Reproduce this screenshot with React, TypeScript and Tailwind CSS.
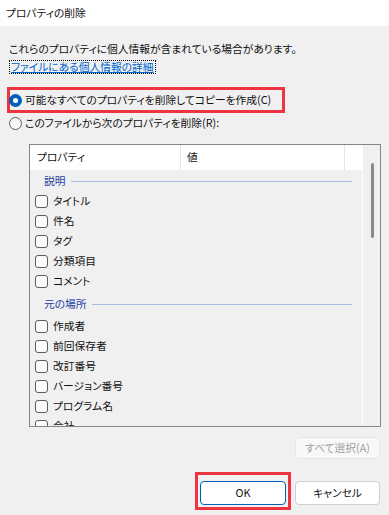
import React from "react";

const font = "font-['Noto_Sans_CJK_JP','Noto_Sans',sans-serif] [font-feature-settings:'palt']";

function Check({ label }: { label: string }) {
  return (
    <div className="flex h-[20px] shrink-0 items-center pl-[5px]">
      <span className="box-border h-[13px] w-[13px] shrink-0 rounded-[3px] border border-[#5c5c5c] bg-[#fbfbfb]" />
      <span className="ml-[5px] whitespace-nowrap text-[10.75px] leading-none text-[#111]">{label}</span>
    </div>
  );
}

function Group({ label, tall }: { label: string; tall?: boolean }) {
  return (
    <div className={`flex shrink-0 items-center pl-[14px] pr-[10px] ${tall ? "h-[25px] pt-[2px]" : "h-[21px] pt-[1px]"}`}>
      <span className="whitespace-nowrap text-[10.75px] leading-none text-[#1f3fa5]">{label}</span>
      <span className="ml-[5px] h-px flex-1 bg-[#a9bce4]" />
    </div>
  );
}

export default function App() {
  return (
    <div className={`${font} h-[515px] w-[389px] overflow-hidden bg-[#f0f0f0] text-black`}>
      <div className="flex h-[26px] items-center bg-white pl-[6px] text-[10.75px] text-[#111]">
        プロパティの削除
      </div>
      <div className="pl-[9px] pr-[8px]">
        <div className="mt-[15px] whitespace-nowrap text-[10.75px] leading-[16px] text-[#111]">
          これらのプロパティに個人情報が含まれている場合があります。
        </div>
        <div className="mt-[3px] flex">
          <span className="box-border whitespace-nowrap border border-dotted border-black px-px text-[10.75px] leading-[12px] text-[#0066cc] underline underline-offset-[1px]">
            ファイルにある個人情報の詳細
          </span>
        </div>
        <div className="ml-[-2px] mt-[13px] box-border flex h-[26px] w-[278px] items-center border-[3px] border-[#ee3341]">
          <span className="ml-[-1px] flex h-[13px] w-[13px] shrink-0 items-center justify-center rounded-full bg-[#005fb8]">
            <span className="h-[5px] w-[5px] rounded-full bg-white" />
          </span>
          <span className="ml-[3px] whitespace-nowrap text-[10.75px] leading-none text-[#111]">
            可能なすべてのプロパティを削除してコピーを作成(C)
          </span>
        </div>
        <div className="flex h-[20px] items-center">
          <span className="box-border h-[13px] w-[13px] shrink-0 rounded-full border border-[#5c5c5c] bg-[#f6f6f6]" />
          <span className="ml-[3px] whitespace-nowrap text-[10.75px] leading-none text-[#111]">
            このファイルから次のプロパティを削除(R):
          </span>
        </div>

        <div className="ml-[20px] mt-[11px] box-border flex h-[283px] border border-[#868686]">
          <div className="flex flex-1 flex-col overflow-hidden">
            <div className="flex h-[25px] shrink-0 bg-white text-[10.75px] leading-none text-[#111]">
              <div className="flex w-[150px] items-center pl-[7px]">プロパティ</div>
              <div className="w-px bg-[#e5e5e5]" />
              <div className="flex w-[163px] items-center pl-[6px]">値</div>
              <div className="w-px bg-[#e5e5e5]" />
              <div className="flex-1" />
            </div>
            <Group label="説明" />
            <Check label="タイトル" />
            <Check label="件名" />
            <Check label="タグ" />
            <Check label="分類項目" />
            <Check label="コメント" />
            <Group label="元の場所" tall />
            <Check label="作成者" />
            <Check label="前回保存者" />
            <Check label="改訂番号" />
            <Check label="バージョン番号" />
            <Check label="プログラム名" />
            <Check label="会社" />
          </div>
          <div className="w-px bg-white" />
          <div className="flex w-[17px] flex-col items-center pt-[18px]">
            <div className="ml-[1px] h-[75px] w-[3px] rounded-full bg-[#8a8a8a]" />
          </div>
        </div>

        <div className="mt-[10px] flex justify-end pr-[1px]">
          <div className="box-border flex h-[22px] w-[85px] items-center justify-center rounded-[4px] border border-[#e6e6e6] bg-[#f8f8f8] text-[10.75px] leading-none text-[#a0a0a0]">
            すべて選択(A)
          </div>
        </div>

        <div className="mt-[13px] flex items-start justify-end pr-[1px]">
          <div className="box-border h-[38px] border-[3px] border-[#ee3341] px-[2px] pt-[6px]">
            <div className="box-border flex h-[24px] w-[86px] items-center justify-center rounded-[4px] border border-[#005fb8] bg-white text-[10.75px] leading-none text-[#111]">
              OK
            </div>
          </div>
          <div className="ml-[4px] mt-[9px] box-border flex h-[24px] w-[85px] items-center justify-center rounded-[4px] border border-[#cfcfcf] bg-white text-[10.75px] leading-none text-[#111]">
            キャンセル
          </div>
        </div>
      </div>
    </div>
  );
}
